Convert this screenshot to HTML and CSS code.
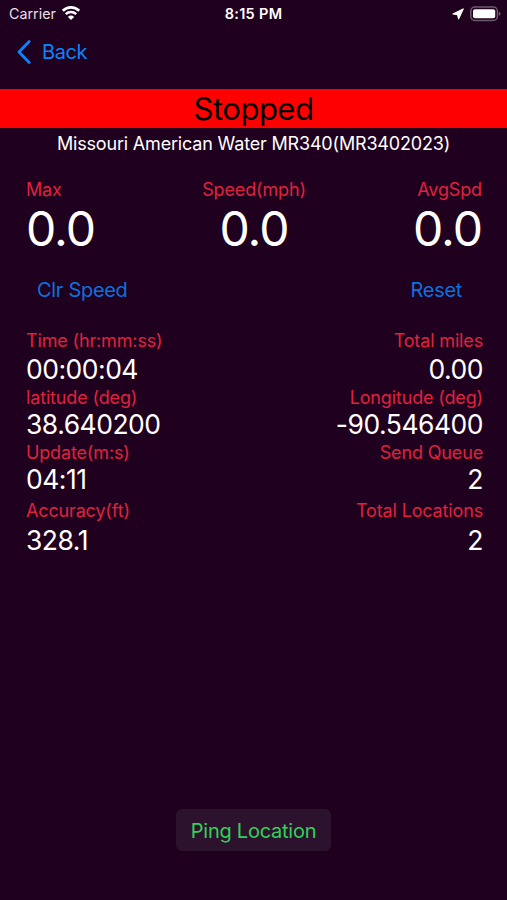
FILE: index.html
```
<!DOCTYPE html>
<html lang="en">
<head>
<meta charset="UTF-8">
<meta name="viewport" content="width=device-width, initial-scale=1.0">
<title>Tracker</title>
<link rel="stylesheet" href="styles.css">
</head>
<body>
<div class="statusBar">
  <div class="carrier">
    <span>Carrier</span>
    <svg class="wifi" width="20" height="16" viewBox="0 0 20 16">
      <path d="M1.8 5.8 A11.6 11.6 0 0 1 18.2 5.8" fill="none" stroke="#fff" stroke-width="2.7"/>
      <path d="M4.8 9.1 A7.4 7.4 0 0 1 15.2 9.1" fill="none" stroke="#fff" stroke-width="2.5"/>
      <path d="M10 15 L6.9 11.9 A4.3 4.3 0 0 1 13.1 11.9 Z" fill="#fff"/>
    </svg>
  </div>
  <div class="clock">8:15 PM</div>
  <div class="battery">
    <svg width="12" height="12" viewBox="0 0 12 12">
      <path d="M11.2 1 L6.6 10.8 L5.6 6.6 L1 6 Z" fill="#fff" stroke="#fff" stroke-width="1.2" stroke-linejoin="round"/>
    </svg>
    <svg width="31" height="16" viewBox="0 0 31 16">
      <rect x="0.8" y="1" width="26.6" height="13.4" rx="4" fill="none" stroke="#6d5a6c" stroke-width="1.5"/>
      <rect x="3" y="3.2" width="22.2" height="9" rx="2" fill="#fff"/>
      <path d="M28.8 5.4 Q30.6 6.2 30.6 7.7 Q30.6 9.2 28.8 10 Z" fill="#6d5a6c"/>
    </svg>
  </div>
</div>

<nav class="navBar">
  <a class="back">
    <svg width="16" height="26" viewBox="0 0 16 26">
      <path d="M13.2 2.6 L3 13 L13.2 23.4" fill="none" stroke="#0a84ff" stroke-width="2.8" stroke-linecap="round" stroke-linejoin="round"/>
    </svg>
    <span>Back</span>
  </a>
</nav>

<div class="state">Stopped</div>
<p class="race">Missouri American Water MR340(MR3402023)</p>

<div class="speeds">
  <span class="label">Max</span>
  <span class="label">Speed(mph)</span>
  <span class="label">AvgSpd</span>
  <span class="speed">0.0</span>
  <span class="speed">0.0</span>
  <span class="speed">0.0</span>
</div>

<div class="actions">
  <a>Clr Speed</a>
  <a>Reset</a>
</div>

<div class="details">
  <span class="label">Time (hr:mm:ss)</span>
  <span class="label">Total miles</span>
  <span class="value">00:00:04</span>
  <span class="value">0.00</span>
  <span class="label">latitude (deg)</span>
  <span class="label">Longitude (deg)</span>
  <span class="value">38.640200</span>
  <span class="value">-90.546400</span>
  <span class="label">Update(m:s)</span>
  <span class="label">Send Queue</span>
  <span class="value">04:11</span>
  <span class="value">2</span>
  <span class="label">Accuracy(ft)</span>
  <span class="label">Total Locations</span>
  <span class="value">328.1</span>
  <span class="value">2</span>
</div>

<footer>
  <button class="ping">Ping Location</button>
</footer>
</body>
</html>
```
FILE: styles.css
```
html, body, div, nav, footer, p, button {
  margin: 0;
  padding: 0;
  box-sizing: border-box;
}

body {
  display: flex;
  flex-direction: column;
  height: 900px;
  background-color: #1f001e;
  color: #fff;
  font-family: Inter, "Liberation Sans", sans-serif;
  white-space: nowrap;
  overflow: hidden;
}

.statusBar {
  display: grid;
  grid-template-columns: 1fr auto 1fr;
  align-items: center;
  height: 27px;
  padding: 0 6px 0 9px;
}

.carrier {
  display: flex;
  align-items: center;
  gap: 5px;
  font-size: 14.3px;
  color: #eadfea;
}

.wifi {
  margin-top: -2px;
}

.clock {
  font-size: 14.5px;
  font-weight: 600;
  letter-spacing: 0.3px;
  margin-left: -3px;
}

.battery {
  display: flex;
  align-items: center;
  justify-content: flex-end;
  gap: 6px;
}

.navBar {
  height: 62px;
  padding: 12px 0 0 16px;
}

.back {
  display: inline-flex;
  align-items: center;
  gap: 10px;
  height: 26px;
  font-size: 20px;
  letter-spacing: -0.4px;
  color: #0a84ff;
}

.state {
  height: 39px;
  line-height: 40px;
  background-color: #ff0000;
  color: #000;
  font-size: 31px;
  letter-spacing: -0.5px;
  text-align: center;
}

.race {
  height: 32px;
  line-height: 31px;
  font-size: 18px;
  letter-spacing: -0.18px;
  text-align: center;
}

.label {
  font-size: 18px;
  letter-spacing: -0.15px;
  color: #e0223f;
}

.speeds {
  display: grid;
  grid-template-columns: 1fr 1fr 1fr;
  grid-template-rows: 24px 54px;
  align-items: center;
  margin-top: 17px;
  padding: 0 25px 0 26px;
}

.speeds span:nth-child(3n + 2) {
  text-align: center;
}

.speeds span:nth-child(3n) {
  text-align: right;
}

.speed {
  font-size: 48px;
  letter-spacing: -1px;
}

.actions {
  display: flex;
  justify-content: space-between;
  align-items: center;
  height: 30px;
  margin-top: 20px;
  padding: 0 45px 0 37px;
  font-size: 20px;
  letter-spacing: -0.3px;
  color: #0b71df;
}

.details {
  display: grid;
  grid-template-columns: 1fr 1fr;
  grid-template-rows: 23px 33px 25px 27px 30px 24px 39px 19px;
  align-items: center;
  margin-top: 24px;
  padding: 0 24px 0 26px;
}

.details span:nth-child(even) {
  text-align: right;
}

.value {
  font-size: 26.5px;
  letter-spacing: -0.5px;
}

footer {
  display: flex;
  justify-content: center;
  margin-top: auto;
  padding-bottom: 49px;
}

.ping {
  width: 155px;
  height: 42px;
  padding-top: 1px;
  border: none;
  border-radius: 6px;
  background-color: #2d122e;
  color: #30d158;
  font-family: inherit;
  font-size: 20px;
  letter-spacing: -0.25px;
}
```
